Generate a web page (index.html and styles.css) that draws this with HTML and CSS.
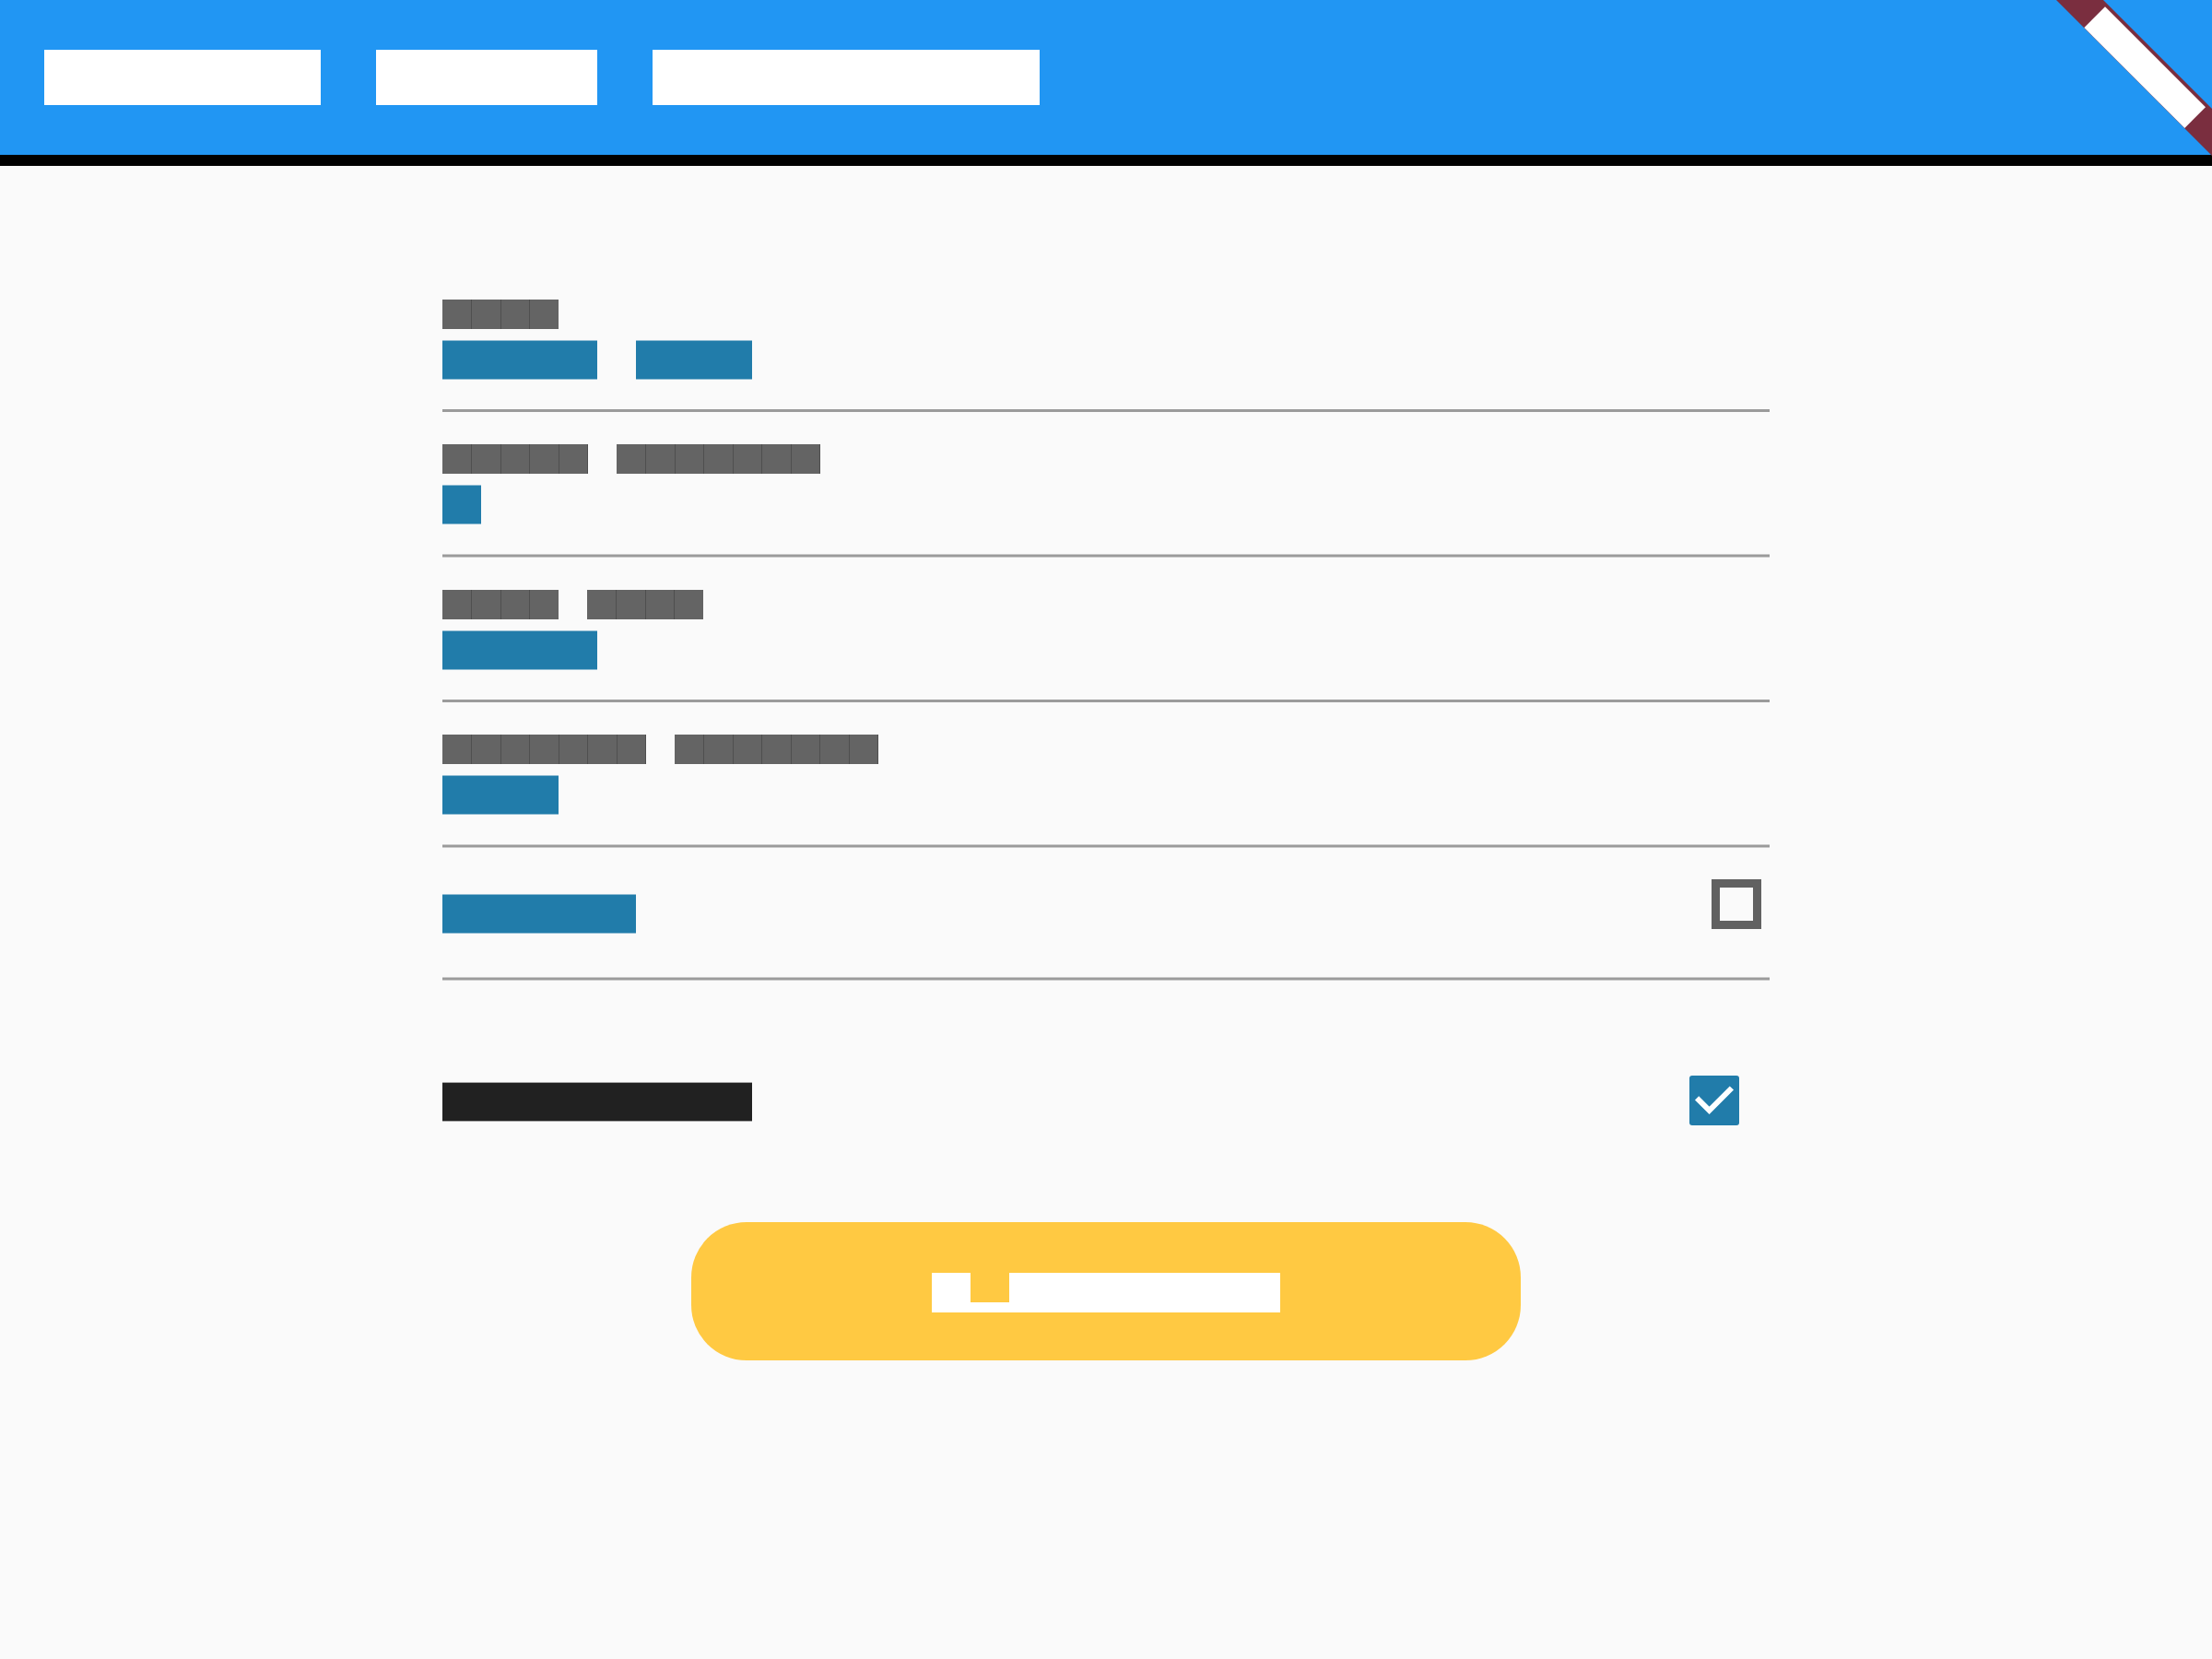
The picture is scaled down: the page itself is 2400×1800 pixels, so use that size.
FILE: index.html
```html
<!DOCTYPE html>
<html lang="en">
<head>
<meta charset="utf-8">
<meta name="viewport" content="width=device-width, initial-scale=1">
<title>Form</title>
<link rel="stylesheet" href="styles.css">
</head>
<body>
<header class="app-bar">
  <h1 class="app-title" aria-label="Form">
    <span class="title-word title-word-md"></span>
    <span class="title-word title-word-sm"></span>
    <span class="title-word title-word-lg"></span>
  </h1>
</header>
<svg class="ribbon" viewBox="0 0 170 170" aria-hidden="true">
  <polygon class="ribbon-band" points="1,0 52,0 170,118 170,169"/>
  <polygon class="ribbon-text" points="31.3,30 54,7.3 163,116.3 140.3,139"/>
</svg>
<main class="page">
  <form class="form">
    <div class="field">
      <label class="field-label" for="field-1" aria-label="Field 1"><span class="cells cells-4"></span></label>
      <input class="field-input value-4-3" id="field-1" type="text">
    </div>
    <div class="field field-soft">
      <label class="field-label" for="field-2" aria-label="Field 2"><span class="cells cells-5"></span><span class="cells cells-7"></span></label>
      <input class="field-input value-1" id="field-2" type="text">
    </div>
    <div class="field">
      <label class="field-label" for="field-3" aria-label="Field 3"><span class="cells cells-4"></span><span class="cells cells-4"></span></label>
      <input class="field-input value-4" id="field-3" type="text">
    </div>
    <div class="field field-soft">
      <label class="field-label" for="field-4" aria-label="Field 4"><span class="cells cells-7"></span><span class="cells cells-7"></span></label>
      <input class="field-input value-3" id="field-4" type="text">
    </div>
    <div class="field-check">
      <label class="check-label" for="option-1" aria-label="Option 1"></label>
      <input class="checkbox" id="option-1" type="checkbox">
    </div>
    <div class="tile">
      <label class="tile-label" for="option-2" aria-label="Option 2"></label>
      <input class="checkbox" id="option-2" type="checkbox" checked>
    </div>
    <button class="submit" type="button" aria-label="Submit">
      <span class="glyph glyph-first"></span>
      <span class="glyph glyph-low"></span>
      <span class="glyph glyph-rest"></span>
    </button>
  </form>
</main>
</body>
</html>
```
FILE: styles.css
```css
:root {
  --blue: #217caa;
  --blue-edge: #8ebbd2;
  --bar-blue: linear-gradient(var(--blue-edge) 1px, var(--blue) 1px, var(--blue) 42px, var(--blue-edge) 42px);
  --label: #646464;
  --seam: #4f4f4f;
  --rule: #9b9b9b;
  --rule-edge: #cacaca;
  --rule-soft: linear-gradient(var(--rule-edge) 1px, var(--rule) 1px, var(--rule) 3px, var(--rule-edge) 3px);
}

* {
  box-sizing: border-box;
}

body {
  margin: 0;
  min-height: 100vh;
  background: #fafafa;
  font-family: Roboto, sans-serif;
}

.app-bar {
  padding: 54px 48px;
  background: #2196f3;
  border-bottom: 12px solid #000;
}

.app-title {
  display: flex;
  gap: 60px;
  margin: 0;
}

.title-word {
  height: 60px;
  background: #fff;
}

.title-word-sm { width: 240px; }
.title-word-md { width: 300px; }
.title-word-lg { width: 420px; }

/* Corner banner lies over the app bar */
.ribbon {
  position: absolute;
  top: 0;
  right: 0;
  width: 170px;
  height: 170px;
}

.ribbon-band { fill: #7a2e3f; }
.ribbon-text { fill: #fff; }

.page {
  padding: 110px 20%;
}

.form {
  display: flex;
  flex-direction: column;
}

.field {
  display: flex;
  flex-direction: column;
  gap: 12px;
  padding: 35px 0 32px;
  border-bottom: 3px solid var(--rule);
}

.field-soft {
  padding-bottom: 36px;
  border-bottom: 0;
  background: var(--rule-soft) left bottom / 100% 4px no-repeat;
}

.field-label {
  display: flex;
  gap: 31px;
}

/* One block per character, with a seam where neighbours meet */
.cells {
  height: 32px;
  background:
    linear-gradient(var(--label), var(--label)) 0 0 / 1px 100% no-repeat,
    linear-gradient(90deg, var(--seam) 1px, var(--label) 1px, var(--label) 31px, var(--seam) 31px, var(--seam) 32px, var(--label) 32px) 0 0 / 63px 100% repeat-x;
}

.cells-4 { width: 126px; }
.cells-5 { width: 158px; }
.cells-7 { width: 221px; }

.field-input {
  width: 100%;
  height: 43px;
  padding: 0;
  border: 0;
  outline: 0;
  color: var(--blue);
  font-size: 42px;
  background: var(--bar-blue) left top / 42px 43px no-repeat;
}

.value-3 { background-size: 126px 43px; }
.value-4 { background-size: 168px 43px; }

.value-4-3 {
  background:
    var(--bar-blue) 0 0 / 168px 43px no-repeat,
    var(--bar-blue) 210px 0 / 126px 43px no-repeat;
}

.field-check {
  display: flex;
  justify-content: space-between;
  align-items: flex-end;
  padding: 34px 9px 51px 0;
  background: var(--rule-soft) left bottom / 100% 4px no-repeat;
}

.field-check .checkbox {
  margin-bottom: 5px;
}

.check-label {
  width: 210px;
  height: 43px;
  background: var(--bar-blue);
}

.tile {
  display: flex;
  justify-content: space-between;
  align-items: flex-start;
  margin-top: 103px;
  padding-right: 33px;
}

.tile-label {
  width: 336px;
  height: 43px;
  margin-top: 7px;
  background: linear-gradient(#a4a4a4 1px, #212121 1px, #212121 42px, #a4a4a4 42px);
}

.checkbox {
  appearance: none;
  width: 54px;
  height: 54px;
  margin: 0;
  border: 9px solid #616161;
}

.checkbox:checked {
  border: 0;
  border-radius: 3px;
  background: var(--blue) url("data:image/svg+xml,%3Csvg xmlns='http://www.w3.org/2000/svg' viewBox='0 0 54 54'%3E%3Cpath d='M8.1 24.3 21.6 37.8 45.9 13.5' fill='none' stroke='%23fff' stroke-width='6'/%3E%3C/svg%3E") center / 54px 54px no-repeat;
}

.submit {
  display: flex;
  justify-content: center;
  align-items: flex-end;
  align-self: center;
  width: 900px;
  max-width: 100%;
  margin-top: 105px;
  padding: 55px 0 52px;
  border: 0;
  border-radius: 60px;
  background: #ffc942;
}

.glyph {
  height: 43px;
  background: #fff;
}

.glyph-first { width: 42px; }
.glyph-low { width: 42px; height: 11px; }
.glyph-rest { width: 294px; }
```
